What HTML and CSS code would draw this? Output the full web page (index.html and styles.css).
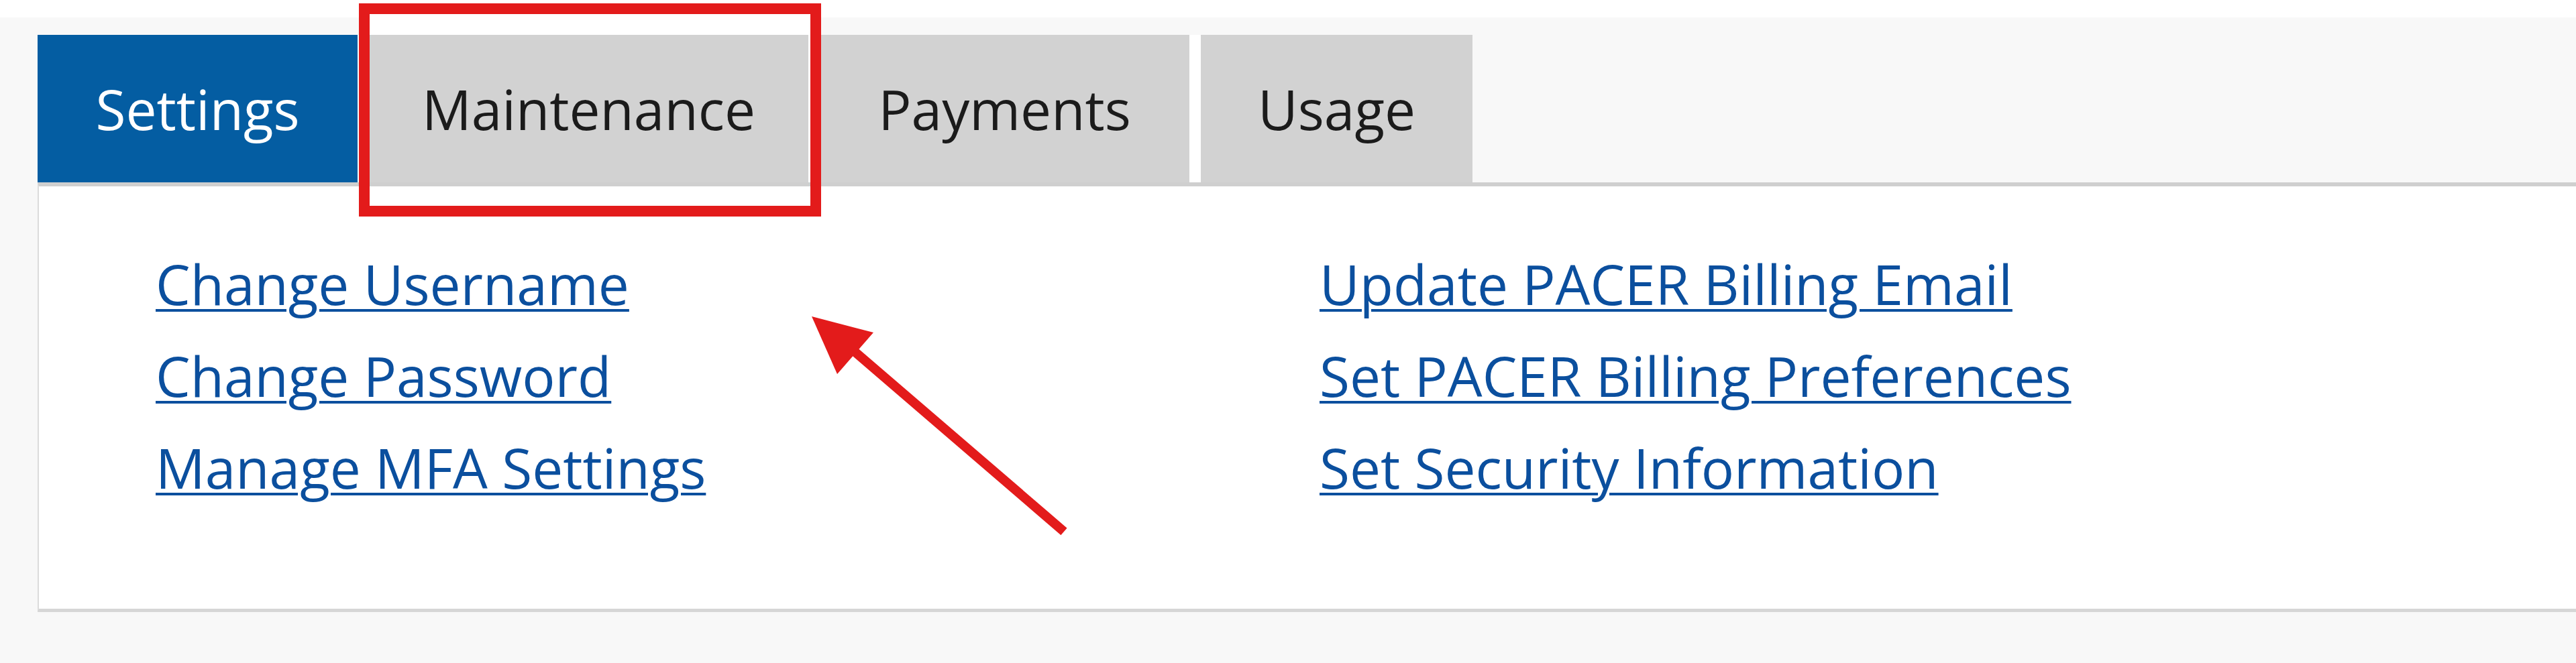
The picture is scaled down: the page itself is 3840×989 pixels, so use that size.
FILE: index.html
```html
<!DOCTYPE html>
<html lang="en">
<head>
  <meta charset="UTF-8" />
  <meta name="viewport" content="width=device-width, initial-scale=1.0" />
  <title>Manage My Account</title>
  <link rel="stylesheet" href="styles.css">
</head>
<body>
  <div class="account">
    <ul class="tabs">
      <li class="tab tab-settings active">Settings</li>
      <li class="tab tab-maintenance">Maintenance</li>
      <li class="tab tab-payments">Payments</li>
      <li class="tab tab-usage">Usage</li>
    </ul>
    <div class="panel">
      <ul class="links">
        <li><a href="#">Change Username</a></li>
        <li><a href="#">Change Password</a></li>
        <li><a href="#">Manage MFA Settings</a></li>
      </ul>
      <ul class="links">
        <li><a href="#">Update PACER Billing Email</a></li>
        <li><a href="#">Set PACER Billing Preferences</a></li>
        <li><a href="#">Set Security Information</a></li>
      </ul>
    </div>
  </div>

  <!-- callout marks drawn on top of the page -->
  <div class="callout-box"></div>
  <svg class="callout-arrow" width="3840" height="989" viewBox="0 0 3840 989">
    <line x1="1270" y1="521" x2="1586" y2="793" stroke="#e31b1b" stroke-width="14" />
    <polygon points="1210,472 1302,496 1248,558" fill="#e31b1b" />
  </svg>
</body>
</html>
```

FILE: styles.css
```css
body {
  margin: 0;
  background: #fff;
  font-family: "Open Sans", Arial, sans-serif;
}
ul {
  list-style: none;
  margin: 0;
  padding: 0;
}
.account {
  margin-top: 26px;
  background: #f8f8f8;
  padding: 26px 0 76px 56px;
}
.tabs {
  display: flex;
  height: 220px;
}
.tab {
  display: flex;
  align-items: center;
  justify-content: center;
  background: #d2d2d2;
  color: #1b1b1b;
  font-size: 82px;
}
.tab + .tab {
  border-left: 17px solid #fff;
}
.tab-settings { width: 477px; }
.tab-maintenance { width: 655px; }
.tab-payments { width: 551px; }
.tab-usage { width: 405px; }
.tab.active {
  background: #045da2;
  color: #fff;
}
.panel {
  display: flex;
  background: #fff;
  border-top: 6px solid #cfcfcf;
  border-left: 2px solid #dcdcdc;
  border-bottom: 5px solid #d6d6d6;
  padding: 77px 0 142px 174px;
}
.links:first-child {
  width: 1735px;
}
.links li {
  line-height: 137px;
  font-size: 82px;
}
.links a {
  color: #0b4f9e;
  text-decoration-thickness: 4px;
  text-underline-offset: 6px;
}
.callout-box {
  position: absolute;
  left: 535px;
  top: 5px;
  width: 689px;
  height: 318px;
  box-sizing: border-box;
  border: 16px solid #e31b1b;
  background: linear-gradient(#fff 31px, transparent 31px);
}
.callout-arrow {
  position: absolute;
  left: 0;
  top: 0;
  pointer-events: none;
}
```
